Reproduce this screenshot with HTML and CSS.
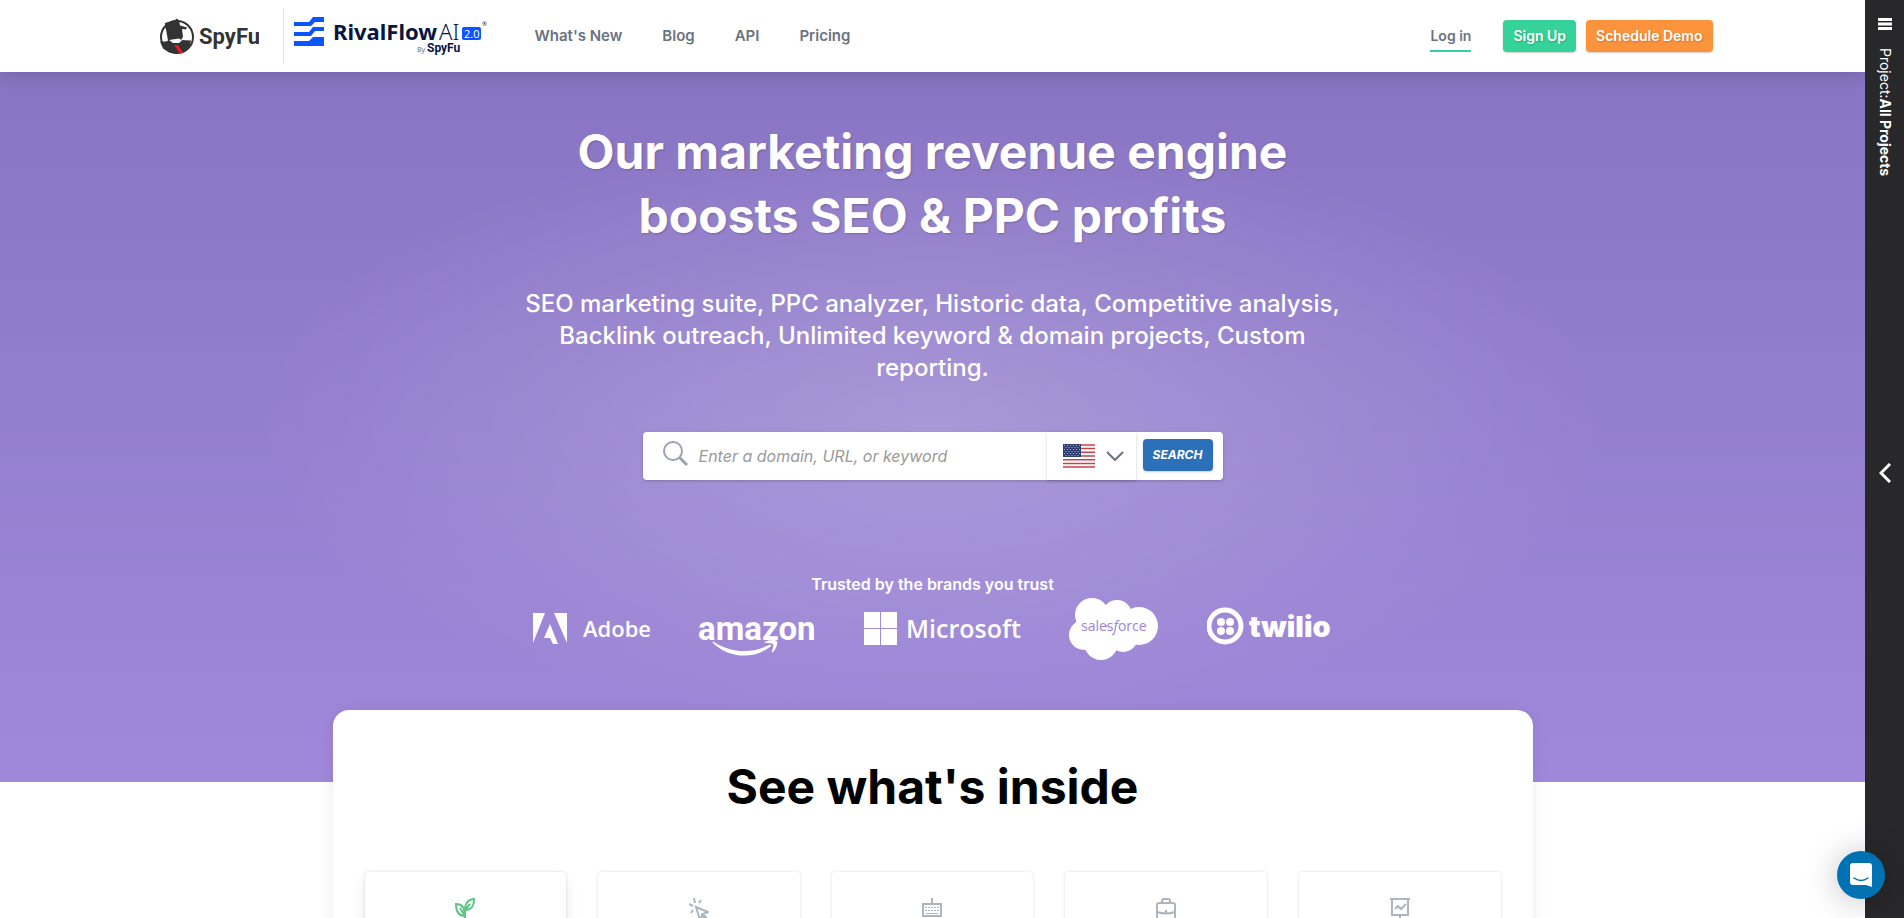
FILE: index.html
```html
<!DOCTYPE html>
<html lang="en">
<head>
    <meta charset="UTF-8">
    <meta name="viewport" content="width=device-width, initial-scale=1.0">
    <title>SpyFu - Competitor Keyword Research Tools</title>
    <link rel="stylesheet" href="styles.css">
</head>
<body>

    <div class="page">
        <!-- Navbar -->
        <header class="navbar">
            <div class="navbar-inner">
                <a href="#" class="logo" aria-label="SpyFu">
                    <svg width="100" height="38" viewBox="0 0 100 38">
                        <circle cx="18" cy="20" r="16" fill="#fff" stroke="#333" stroke-width="2"/>
                        <path d="M6 6l10-3 2-1.500 2 2 1 5 7 2-1 2-4-.5 1 8-2 3 10 .5-1 5-6 6-8 2-7-1-6-4-3-7 6 0 2-1-2-11-1-3z" fill="#333"/>
                        <path d="M10 23l10-1.500 3 2-3 2.500-6 0z" fill="#fff"/>
                        <path d="M15 28l4 0 5 8-3 .5z" fill="#ed1c24"/>
                        <text x="40" y="27" class="spyfu-word">SpyFu</text>
                    </svg>
                </a>
                <a href="#" class="logo rival-logo" aria-label="RivalFlowAI by SpyFu">
                    <svg width="194" height="42" viewBox="0 0 194 42">
                        <g fill="#0a55ff">
                            <path d="M0 6h15l4-5h11v5H21l-4 4H0z"/>
                            <path d="M0 16h15l4-5h11v4H21l-4 5H0z"/>
                            <path d="M0 25h15l4-4h11v9H0z"/>
                        </g>
                        <text x="39" y="24" class="rival-word">RivalFlow</text>
                        <text x="145" y="24" class="rival-ai">AI</text>
                        <rect x="168" y="11" width="19" height="13" rx="2" fill="#0a55ff"/>
                        <text x="170" y="22" class="rival-version">2.0</text>
                        <text x="188" y="10" class="rival-mark">®</text>
                        <text x="123" y="36" class="rival-by">By</text>
                        <text x="133" y="36" class="rival-spyfu">SpyFu</text>
                    </svg>
                </a>
                <nav class="menu">
                    <a href="#">What's New</a>
                    <a href="#">Blog</a>
                    <a href="#">API</a>
                    <a href="#">Pricing</a>
                </nav>
                <div class="account">
                    <a href="#" class="login">Log in</a>
                    <a href="#" class="btn btn-green">Sign Up</a>
                    <a href="#" class="btn btn-orange">Schedule Demo</a>
                </div>
            </div>
        </header>

        <!-- Hero -->
        <section class="hero">
            <h1>Our marketing revenue engine<br>boosts SEO &amp; PPC profits</h1>
            <p class="tagline">SEO marketing suite, PPC analyzer, Historic data, Competitive analysis, Backlink outreach, Unlimited keyword &amp; domain projects, Custom reporting.</p>

            <form class="search">
                <label for="query" class="search-label" aria-label="Search">
                    <svg width="26" height="26" viewBox="0 0 26 26" fill="none" stroke="#9ca3af" stroke-width="2">
                        <circle cx="10" cy="10" r="9"/>
                        <path d="M16.500 16.500L24 24" stroke-width="3"/>
                    </svg>
                </label>
                <input type="text" id="query" placeholder="Enter a domain, URL, or keyword">
                <button type="button" class="country" aria-label="Country: United States">
                    <svg width="32" height="24" viewBox="0 0 32 24">
                        <path fill="#fff" d="M0 0h32v24H0z"/>
                        <path stroke="#c8414b" stroke-width="1.500" d="M0 1h32M0 4.500h32M0 8.300h32M0 12h32M0 15.700h32M0 19.400h32M0 23h32"/>
                        <path fill="#2e3f70" d="M0 0h18v13H0z"/>
                        <g stroke="#aab3cc" stroke-width="1" stroke-dasharray="1 2">
                            <path d="M1 1.500h16M1 5.500h16M1 9.500h16"/>
                            <path d="M2.500 3.500h14M2.500 7.500h14M2.500 11.500h14"/>
                        </g>
                    </svg>
                    <svg width="18" height="10" viewBox="0 0 18 10" fill="none" stroke="#6b7280" stroke-width="2">
                        <path d="M1 1l8 8 8-8"/>
                    </svg>
                </button>
                <button type="submit" class="search-button">SEARCH</button>
            </form>

            <p class="trusted">Trusted by the brands you trust</p>
            <div class="brands">
                <svg width="117" height="62" viewBox="0 0 117 62" fill="#fff">
                    <path d="M0 15h12L0 45zM21 15h13v30zM17 26l8 20h-5l-3-6h-6z"/>
                    <text x="50" y="39" class="adobe-word">Adobe</text>
                </svg>
                <svg width="118" height="62" viewBox="0 0 118 62" fill="#fff">
                    <text x="0" y="42" class="amazon-word">amazon</text>
                    <path d="M16 44c17 11 37 12 55 3 2-1 3 1 1 2-18 13-41 11-57-4-1-1 0-2 1-1z"/>
                    <path d="M67 44c3-2 9-3 12-1 1 3-1 8-4 11-1 1-2 0-1-1 1-3 2-6 1-7s-4-1-7-1c-1 0-2 0-1-1z"/>
                </svg>
                <svg width="157" height="62" viewBox="0 0 157 62" fill="#fff">
                    <path d="M0 14h16v16H0zM17 14h16v16H17zM0 31h16v16H0zM17 31h16v16H17z"/>
                    <text x="42" y="40" class="microsoft-word">Microsoft</text>
                </svg>
                <svg width="90" height="62" viewBox="0 0 90 62" fill="#fff">
                    <circle cx="23" cy="17" r="17"/>
                    <circle cx="48" cy="17" r="15"/>
                    <circle cx="70" cy="28" r="19"/>
                    <circle cx="15" cy="37" r="15"/>
                    <circle cx="32" cy="45" r="17"/>
                    <circle cx="54" cy="39" r="15"/>
                    <text x="12" y="33" class="salesforce-word">sales<tspan font-style="italic">f</tspan>orce</text>
                </svg>
                <svg width="126" height="62" viewBox="0 0 126 62" fill="#fff">
                    <circle cx="18" cy="28" r="16" fill="none" stroke="#fff" stroke-width="5"/>
                    <circle cx="14" cy="24" r="4"/>
                    <circle cx="23" cy="24" r="4"/>
                    <circle cx="14" cy="33" r="4"/>
                    <circle cx="23" cy="33" r="4"/>
                    <text x="42" y="39" class="twilio-word">twilio</text>
                </svg>
            </div>
        </section>

        <!-- Feature tabs -->
        <section class="inside">
            <h2>See what's inside</h2>
            <div class="cards">
                <button type="button" class="card active" aria-label="SEO">
                    <svg width="20" height="24" viewBox="0 0 20 24" fill="none" stroke="currentColor" stroke-width="2">
                        <path d="M10 24V11c0-5 3-10 9-10 0 7-2 11-9 11M10 18c-6 0-9-4-9-12 6 0 9 4 9 12M10 12l5-6M10 18L5 10"/>
                    </svg>
                </button>
                <button type="button" class="card" aria-label="PPC">
                    <svg width="20" height="24" viewBox="0 0 20 24" fill="none" stroke="currentColor" stroke-width="2">
                        <path d="M7 9l4 13 2-5 5 6 1-1-5-6 5-2zM6 5L5 0M10 5l2-3M4 8L0 6M4 12l-2 3"/>
                    </svg>
                </button>
                <button type="button" class="card" aria-label="Keywords">
                    <svg width="20" height="24" viewBox="0 0 20 24" fill="none" stroke="currentColor" stroke-width="2">
                        <path d="M1 6h18v12H1zM10 6V0"/>
                        <path d="M3 9.500h14M3 12.500h14" stroke-width="1" stroke-dasharray="2 1"/>
                        <path d="M4 15.500h12" stroke-width="1"/>
                    </svg>
                </button>
                <button type="button" class="card" aria-label="Business">
                    <svg width="20" height="24" viewBox="0 0 20 24" fill="none" stroke="currentColor" stroke-width="2">
                        <rect x="1" y="5" width="18" height="18" rx="2"/>
                        <path d="M6 5V3q0-2 2-2h4q2 0 2 2v2M1 14q9 3 18 0M10 12v3"/>
                    </svg>
                </button>
                <button type="button" class="card" aria-label="Reporting">
                    <svg width="20" height="24" viewBox="0 0 20 24" fill="none" stroke="currentColor" stroke-width="2">
                        <path d="M0 1h20M2 1v16h16V1M10 17v3M5 22h10M5 11l3-3 3 3 5-5"/>
                    </svg>
                </button>
            </div>
        </section>
    </div>

    <!-- Project sidebar -->
    <aside class="sidebar">
        <button type="button" class="sidebar-menu" aria-label="Menu">
            <svg width="14" height="12" viewBox="0 0 14 12" stroke="#fff" stroke-width="3">
                <path d="M0 1.500h14M0 6h14M0 10.500h14"/>
            </svg>
        </button>
        <div class="project">Project:<strong>All Projects</strong></div>
        <button type="button" class="sidebar-toggle" aria-label="Open projects">
            <svg width="12" height="20" viewBox="0 0 12 20" fill="none" stroke="#fff" stroke-width="3">
                <path d="M11 1l-9 9 9 9"/>
            </svg>
        </button>
    </aside>

    <button type="button" class="chat" aria-label="Open chat">
        <svg width="22" height="24" viewBox="0 0 22 24">
            <path d="M3 0h16q3 0 3 3v21l-6-2H3q-3 0-3-3V3q0-3 3-3z" fill="#fff"/>
            <path d="M4 15q7 5 14 0" fill="none" stroke="#0071b2" stroke-width="1.500" stroke-linecap="round"/>
        </svg>
    </button>

</body>
</html>
```
FILE: styles.css
```css
/* Reset and global styling */
* {
    margin: 0;
    padding: 0;
    box-sizing: border-box;
}
body {
    font-family: Inter, Arial, sans-serif;
    background-color: #fff;
    color: #000;
}
a {
    text-decoration: none;
}
button {
    border: none;
    background: none;
    font-family: inherit;
    cursor: pointer;
}
svg {
    display: block;
}
.page {
    height: 100vh;
    margin-right: 39px; /* Space for fixed sidebar */
    overflow: hidden;
}

/* Navbar styling */
.navbar {
    position: relative;
    z-index: 10;
    height: 72px;
    background-color: #fff;
    box-shadow: 0 4px 16px rgba(0, 0, 0, 0.14);
}
.navbar-inner {
    max-width: 1568px;
    height: 100%;
    margin: 0 auto;
    padding: 0 4px 0 10px;
    display: flex;
    align-items: center;
}
.logo {
    flex-shrink: 0;
}
.rival-logo {
    height: 56px;
    margin-left: 24px;
    padding: 8px 0 0 10px;
    border-left: 1px solid #e5e7eb;
}
.spyfu-word {
    font: 700 22px Roboto, sans-serif;
    fill: #333;
}
.rival-word {
    font: 700 22px "Noto Sans", sans-serif;
    fill: #071541;
}
.rival-ai {
    font: 300 22px "Noto Sans", sans-serif;
    fill: #071541;
}
.rival-version {
    font: 400 11px "Open Sans", sans-serif;
    fill: #fff;
}
.rival-mark {
    font: 400 6px "Open Sans", sans-serif;
    fill: #071541;
}
.rival-by {
    font: 400 7px "Open Sans", sans-serif;
    fill: #555f80;
}
.rival-spyfu {
    font: 700 12px Roboto, sans-serif;
    fill: #071541;
}
.menu {
    display: flex;
    gap: 40px;
    margin-left: 47px;
}
.menu a,
.login {
    color: #6b7280;
    font-size: 15px;
    line-height: 24px;
    font-weight: 600;
}
.account {
    display: flex;
    align-items: center;
    margin-left: auto;
}
.login {
    margin-right: 32px;
    padding: 4px 0 2px;
    font-size: 14px;
    border-bottom: 2px solid #34d399;
}
.btn {
    margin-left: 10px;
    padding: 0 10px;
    color: #fff;
    font-size: 14px;
    line-height: 32px;
    font-weight: 600;
    border-radius: 4px;
    text-shadow: 1px 1px 2px rgba(0, 0, 0, 0.2);
    box-shadow: 0 1px 2px rgba(0, 0, 0, 0.2);
}
.btn-green {
    margin-left: 0;
    background-color: #35d399;
}
.btn-orange {
    background-color: #fb923c;
}

/* Hero styling */
.hero {
    height: 710px;
    padding-top: 48px;
    color: #fff;
    text-align: center;
    background:
        radial-gradient(680px 300px at 50% 50%, rgba(255, 255, 255, 0.2), rgba(255, 255, 255, 0)),
        linear-gradient(#8975c3, #a088da);
}
h1 {
    font-size: 48px;
    line-height: 64px;
    font-weight: 700;
    text-shadow: 1px 1px 2px rgba(0, 0, 0, 0.2);
}
.tagline {
    max-width: 832px;
    margin: 40px auto 0;
    font-size: 24px;
    line-height: 32px;
    font-weight: 500;
}
.search {
    display: flex;
    width: 580px;
    height: 48px;
    margin: 48px auto 0;
    background-color: #fff;
    border-radius: 4px;
    box-shadow: 0 1px 3px rgba(0, 0, 0, 0.2);
}
.search-label {
    padding: 9px 0 0 20px;
}
.search input {
    flex: 1;
    min-width: 0;
    padding: 0 10px;
    border: none;
    outline: none;
    background: none;
    font-family: inherit;
    font-size: 16px;
    font-style: italic;
}
.search input::placeholder {
    color: #999;
}
.country {
    display: flex;
    align-items: center;
    justify-content: space-between;
    width: 89px;
    padding: 0 12px 0 16px;
    box-shadow: 0 1px 3px rgba(0, 0, 0, 0.2);
}
.search-button {
    width: 70px;
    height: 32px;
    margin: 7px 10px 0 7px;
    padding-bottom: 2px;
    background-color: #2b70b9;
    border-radius: 4px;
    color: #fff;
    font-size: 12px;
    font-style: italic;
    font-weight: 700;
    box-shadow: 0 1px 2px rgba(0, 0, 0, 0.2);
}
.trusted {
    margin-top: 92px;
    font-size: 16px;
    line-height: 24px;
    font-weight: 600;
}
.brands {
    display: flex;
    justify-content: center;
    gap: 48px;
    margin-top: 2px;
}
.adobe-word {
    font: 600 22px "Open Sans", sans-serif;
}
.amazon-word {
    font: 700 33px Roboto, sans-serif;
}
.microsoft-word {
    font: 600 25px "Open Sans", sans-serif;
}
.salesforce-word {
    font: 500 14px "Open Sans", sans-serif;
    fill: #9b85d6;
}
.twilio-word {
    font: 900 29px Inter, sans-serif;
}

/* Feature panel styling */
.inside {
    position: relative;
    max-width: 1200px;
    height: 400px;
    margin: -72px auto 0;
    padding: 45px 32px;
    background-color: #fff;
    border-radius: 16px;
    box-shadow: 0 4px 16px rgba(0, 0, 0, 0.08);
}
h2 {
    font-size: 48px;
    line-height: 64px;
    font-weight: 700;
    text-align: center;
}
.cards {
    display: grid;
    grid-template-columns: repeat(5, 1fr);
    gap: 32px;
    margin-top: 53px;
}
.card {
    display: flex;
    justify-content: center;
    height: 120px;
    padding-top: 26px;
    color: #adb5bd;
    border-radius: 4px;
    box-shadow: 0 0 3px rgba(0, 0, 0, 0.15);
}
.card.active {
    color: #5ac783;
    box-shadow: 0 0 3px rgba(0, 0, 0, 0.15), 0 8px 16px rgba(0, 0, 0, 0.08);
}

/* Sidebar styling */
.sidebar {
    position: fixed;
    top: 0;
    right: 0;
    bottom: 0;
    z-index: 20;
    width: 39px;
    padding-top: 18px;
    display: flex;
    flex-direction: column;
    align-items: center;
    background-color: #28282a;
}
.project {
    margin-top: 18px;
    writing-mode: vertical-rl;
    color: #fff;
    font-size: 14px;
    line-height: 20px;
}
.sidebar-toggle {
    position: absolute;
    top: 50%;
    margin-top: 4px;
}

/* Chat launcher */
.chat {
    position: fixed;
    right: 19px;
    bottom: 19px;
    z-index: 30;
    display: flex;
    align-items: center;
    justify-content: center;
    width: 48px;
    height: 48px;
    background-color: #0071b2;
    border-radius: 50%;
    box-shadow: 0 2px 32px rgba(0, 0, 0, 0.25);
}
```
